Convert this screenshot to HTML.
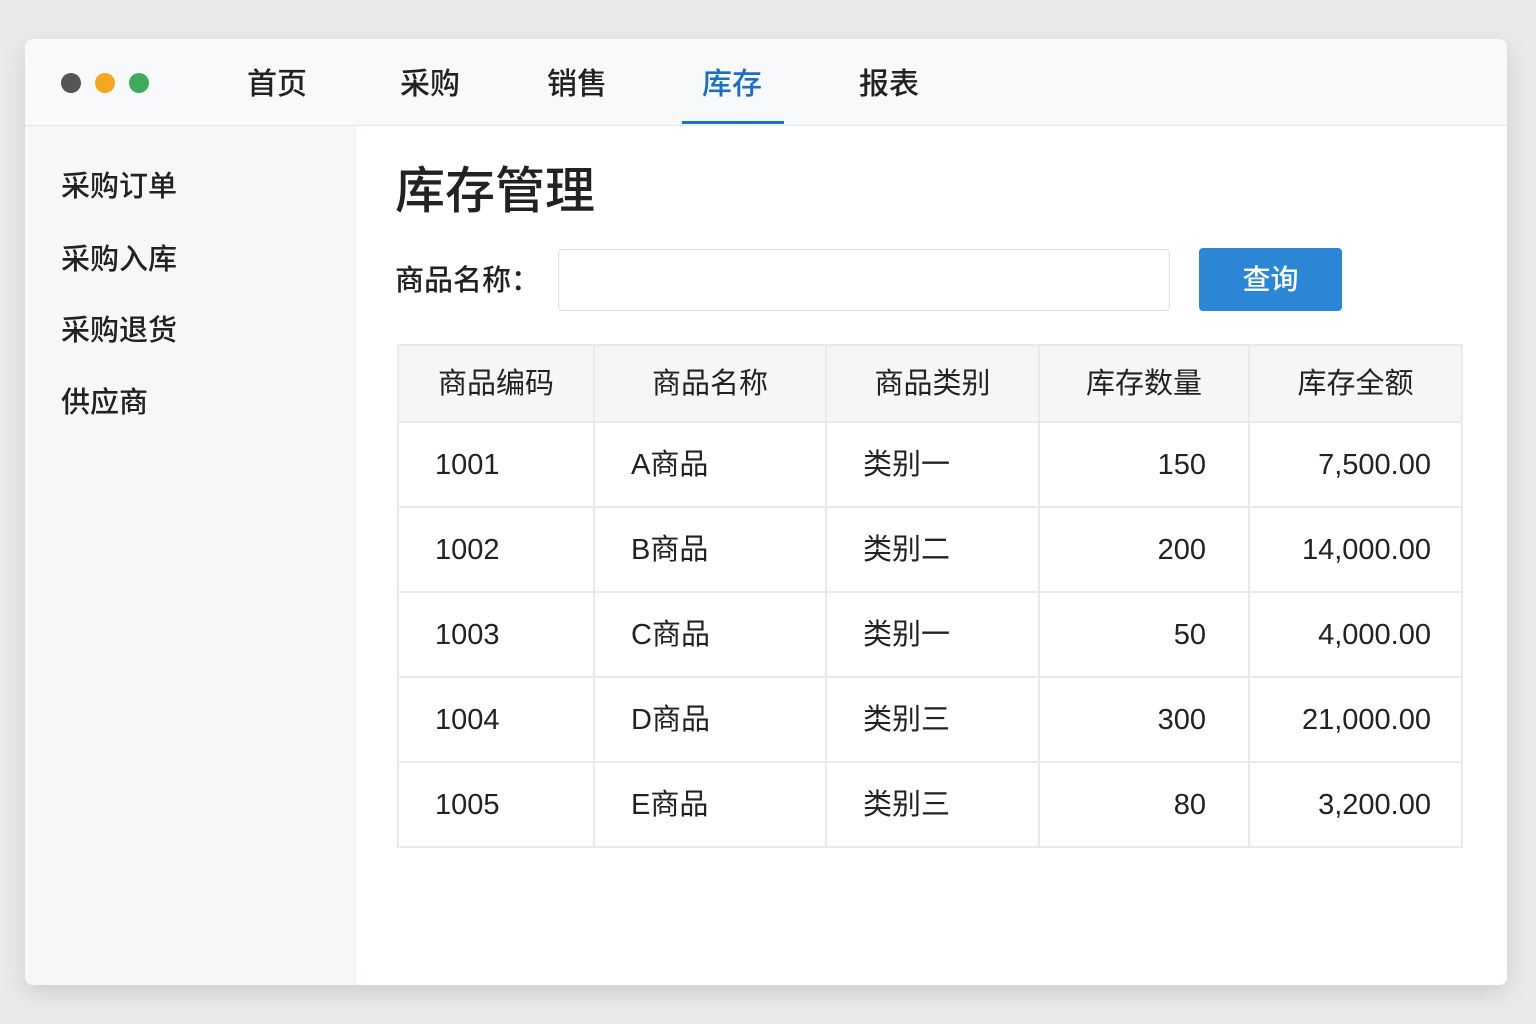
<!DOCTYPE html>
<html><head><meta charset="utf-8"><style>
body{margin:0;width:1536px;height:1024px;background:#e9eaeb;font-family:"Liberation Sans","Noto Sans CJK SC",sans-serif;color:#222;position:relative;overflow:hidden}
.win{position:absolute;left:25px;top:39px;width:1482px;height:946px;background:#fff;border-radius:8px;box-shadow:0 8px 24px rgba(0,0,0,.12);overflow:hidden}
.hd{position:absolute;left:0;top:0;width:100%;height:86px;background:#f8f9fa;border-bottom:1px solid #e4e6e8}
.dot{position:absolute;top:34px;width:20px;height:20px;border-radius:50%}
.nav{position:absolute;top:24px;font-size:30px;line-height:44px;font-weight:500}
.side{position:absolute;left:0;top:87px;width:330px;height:860px;background:#f5f7f9;border-right:1px solid #eceef0}
.si{position:absolute;left:36px;font-size:29px;line-height:40px;font-weight:500}
.a{position:absolute}
table{position:absolute;left:372px;top:305px;border-collapse:collapse;font-size:29px}
td,th{border:2px solid #e8eaec;height:83px;padding:0;font-weight:normal;line-height:40px}
th{background:#f5f6f7;height:75px;text-align:center}
td.r{text-align:right;padding-right:42px}
td.l{padding-left:36px}
</style></head><body>
<div class="win">
<div class="hd">
<div class="dot" style="left:36px;background:#555"></div>
<div class="dot" style="left:70px;background:#f5a623"></div>
<div class="dot" style="left:104px;background:#3daa5c"></div>
<div class="nav" style="left:222px">首页</div>
<div class="nav" style="left:375px">采购</div>
<div class="nav" style="left:522px">销售</div>
<div class="nav" style="left:677px;color:#1a6fc4">库存</div>
<div class="nav" style="left:834px">报表</div>
<div class="a" style="left:657px;top:82px;width:102px;height:3px;background:#1a73c8"></div>
</div>
<div class="side">
<div class="si" style="top:41px">采购订单</div>
<div class="si" style="top:114px">采购入库</div>
<div class="si" style="top:185px">采购退货</div>
<div class="si" style="top:257px">供应商</div>
</div>
<div class="a" style="left:370px;top:120px;font-size:50px;line-height:64px;font-weight:500">库存管理</div>
<div class="a" style="left:370px;top:222px;font-size:29px;line-height:40px;font-weight:500">商品名称：</div>
<div class="a" style="left:533px;top:210px;width:610px;height:60px;border:1px solid #dcdfe3;border-radius:4px;background:#fff"></div>
<div class="a" style="left:1174px;top:209px;width:143px;height:63px;background:#2b86d6;border-radius:4px;color:#fff;font-size:28px;line-height:63px;text-align:center;font-weight:500">查询</div>
<table>
<tr><th style="width:194px">商品编码</th><th style="width:230px">商品名称</th><th style="width:211px">商品类别</th><th style="width:208px">库存数量</th><th style="width:211px">库存全额</th></tr>
<tr><td class="l">1001</td><td class="l">A商品</td><td class="l">类别一</td><td class="r">150</td><td class="r" style="padding-right:30px">7,500.00</td></tr>
<tr><td class="l">1002</td><td class="l">B商品</td><td class="l">类别二</td><td class="r">200</td><td class="r" style="padding-right:30px">14,000.00</td></tr>
<tr><td class="l">1003</td><td class="l">C商品</td><td class="l">类别一</td><td class="r">50</td><td class="r" style="padding-right:30px">4,000.00</td></tr>
<tr><td class="l">1004</td><td class="l">D商品</td><td class="l">类别三</td><td class="r">300</td><td class="r" style="padding-right:30px">21,000.00</td></tr>
<tr><td class="l">1005</td><td class="l">E商品</td><td class="l">类别三</td><td class="r">80</td><td class="r" style="padding-right:30px">3,200.00</td></tr>
</table>
</div>
</body></html>
